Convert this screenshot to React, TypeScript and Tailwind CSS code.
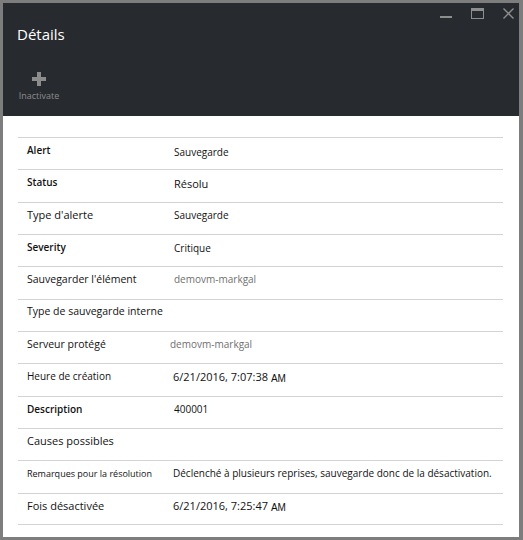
import React from 'react';

type Row = {
  label: string;
  value?: React.ReactNode;
  labelClass: string;
  valueClass?: string;
};

const Stamp: React.FC<{ date: string }> = ({ date }) => (
  <span>
    {date} <span className="text-[10px] font-['Liberation_Sans',sans-serif] relative top-[1px]">AM</span>
  </span>
);

const rows: Row[] = [
  { label: 'Alert', labelClass: 'font-semibold text-[10px]', value: 'Sauvegarde', valueClass: 'text-[10px] pt-[4px]' },
  { label: 'Status', labelClass: 'font-semibold text-[10px]', value: 'Résolu', valueClass: 'text-[11px] pt-[2px]' },
  { label: "Type d'alerte", labelClass: 'text-[11px]', value: 'Sauvegarde', valueClass: 'text-[10px] pt-[1px]' },
  { label: 'Severity', labelClass: 'font-semibold text-[10px]', value: 'Critique', valueClass: 'text-[10px] pt-[1px]' },
  { label: "Sauvegarder l'élément", labelClass: 'text-[10.5px]', value: 'demovm-markgal', valueClass: 'text-[10px] text-[#6f6f6f]' },
  { label: 'Type de sauvegarde interne', labelClass: 'text-[10.5px]' },
  { label: 'Serveur protégé', labelClass: 'text-[10.5px]', value: 'demovm-markgal', valueClass: 'text-[10px] text-[#6f6f6f] -ml-[4px]' },
  { label: 'Heure de création', labelClass: 'text-[10px] pl-[1px]', value: <Stamp date="6/21/2016, 7:07:38" />, valueClass: 'text-[11px] -ml-[1px]' },
  { label: 'Description', labelClass: 'font-semibold text-[10px]', value: '400001', valueClass: 'text-[10px]' },
  { label: 'Causes possibles', labelClass: 'text-[11px]' },
  { label: 'Remarques pour la résolution', labelClass: 'text-[9px]', value: 'Déclenché à plusieurs reprises, sauvegarde donc de la désactivation.', valueClass: 'text-[10px] -ml-[1px]' },
  { label: 'Fois désactivée', labelClass: 'text-[11px] pl-[1px]', value: <Stamp date="6/21/2016, 7:25:47" />, valueClass: 'text-[11px] -ml-[1px]' },
];

export default function App() {
  return (
    <div className="w-[523px] h-[540px] bg-[#7d7d7d] pt-[3px] pl-[3px] pr-[4px] pb-[3px] font-['Open_Sans',sans-serif]">
      <div className="flex h-full flex-col bg-white">
        {/* Header */}
        <div className="relative h-[113px] shrink-0 bg-[#272b30]">
          <div className="absolute right-[5px] top-[2px] flex items-start gap-[19px] text-[#8e8e8e]">
            <div className="mt-[11px] h-[2px] w-[12px] bg-[#8e8e8e]" />
            <div className="mt-[3px] h-[11px] w-[13px] border border-t-[3px] border-[#8e8e8e]" />
            <svg className="mt-[3px] h-[11px] w-[11px]" viewBox="0 0 11 11" fill="none" stroke="#8e8e8e" strokeWidth="1.4">
              <path d="M0.5 0.5l10 10M10.5 0.5l-10 10" />
            </svg>
          </div>
          <h1 className="pl-[14px] pt-[21px] text-[15px] leading-[20px] text-white">Détails</h1>
          <div className="mt-[28px] flex w-[55px] flex-col items-center pl-[17px]">
            <svg className="h-[14px] w-[14px]" viewBox="0 0 14 14" fill="#8c8c8c">
              <rect x="5" y="0" width="4" height="14" />
              <rect x="0" y="5" width="14" height="4" />
            </svg>
            <span className="mt-[5px] text-[9px] leading-[10px] text-[#8c8c8c]">Inactivate</span>
          </div>
        </div>

        {/* Details list */}
        <div className="pl-[15px] pr-[16px] pt-[21px]">
          {rows.map((row, i) => (
            <div
              key={row.label}
              className={
                'flex h-[32.33px] items-center border-t border-[#d3d3d3] pb-[6px] text-[#111] ' +
                (i === rows.length - 1 ? 'border-b' : '')
              }
            >
              <div className={'w-[156px] shrink-0 pl-[9px] ' + row.labelClass}>{row.label}</div>
              {row.value && <div className={row.valueClass}>{row.value}</div>}
            </div>
          ))}
        </div>
      </div>
    </div>
  );
}
